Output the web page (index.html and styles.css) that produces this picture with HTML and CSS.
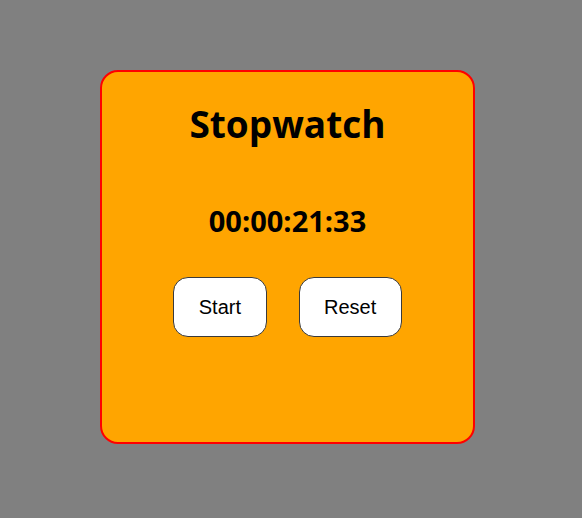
FILE: index.html
```html
<!DOCTYPE html>
<html>
<head>
<meta charset="utf-8">
<link rel="stylesheet" href="styles.css">
</head>
<body>
<div class="page">
  <div class="card">
    <h1 class="title">Stopwatch</h1>
    <div class="time">00:00:21:33</div>
    <div class="buttons">
      <button class="btn">Start</button>
      <button class="btn">Reset</button>
    </div>
  </div>
</div>
</body>
</html>
```
FILE: styles.css
```css
html, body {
  margin: 0;
  padding: 0;
  background: #808080;
  height: 100%;
}
.page {
  padding: 70px 0 0 100px;
}
.card {
  box-sizing: border-box;
  width: 375px;
  height: 374px;
  background: #ffa500;
  border: 2px solid #ff0000;
  border-radius: 18px;
  display: flex;
  flex-direction: column;
  align-items: center;
  font-family: "Open Sans", "Noto Sans", sans-serif;
}
.title {
  margin: 22px 0 0;
  font-size: 37px;
  font-weight: 700;
  line-height: 60px;
  color: #000;
}
.time {
  margin-top: 47px;
  font-size: 29px;
  font-weight: 700;
  line-height: 40px;
  color: #000;
}
.buttons {
  margin-top: 36px;
  display: flex;
  gap: 32px;
}
.btn {
  font-family: "Liberation Sans", Arial, sans-serif;
  font-size: 20px;
  line-height: 23px;
  padding: 17.5px 24.5px;
  background: #fff;
  color: #000;
  border: 1px solid #3a3a3a;
  border-radius: 15px;
}
```
